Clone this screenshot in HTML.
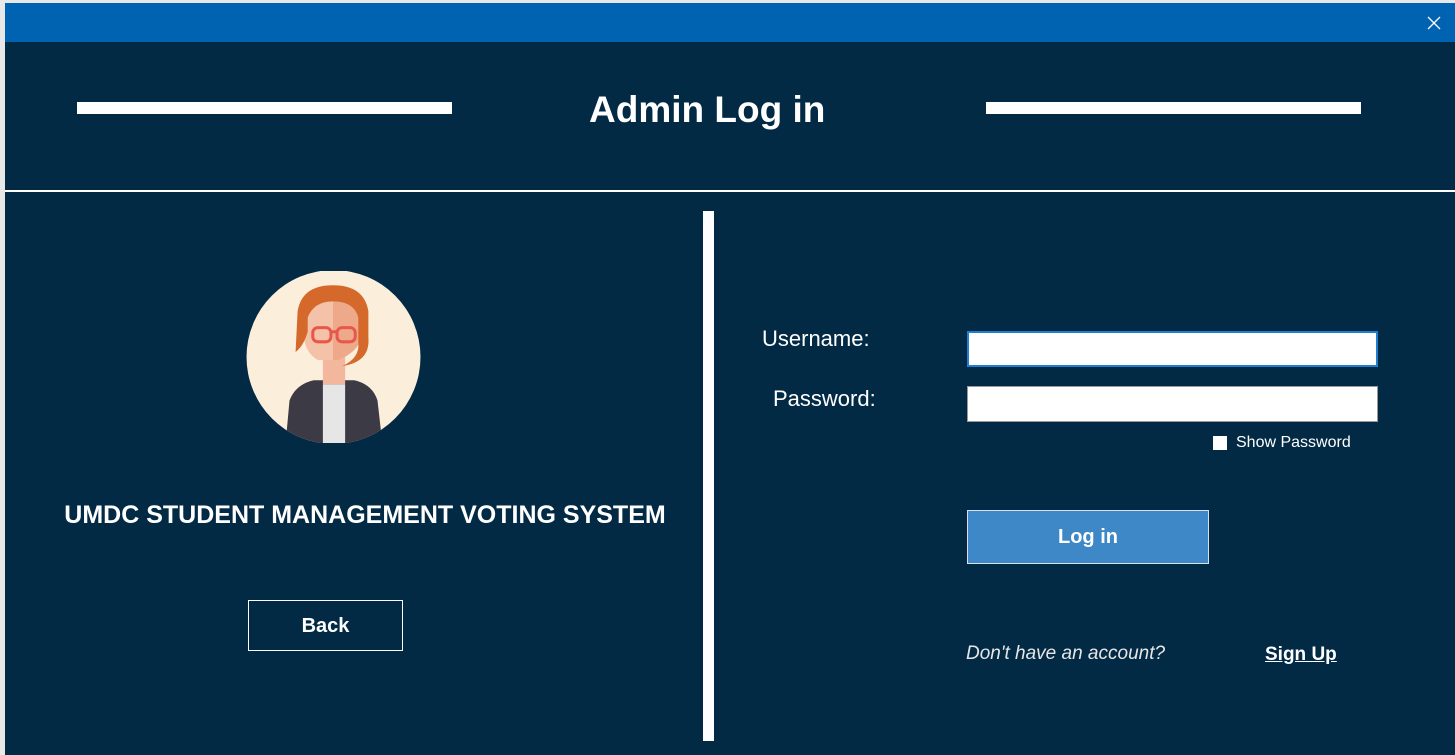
<!DOCTYPE html>
<html><head><meta charset="utf-8"><style>
*{margin:0;padding:0;box-sizing:border-box}
body{width:1455px;height:755px;overflow:hidden;background:#e8e8e8;font-family:"Liberation Sans",sans-serif;position:relative}
.abs{position:absolute}
.t{color:#fff;white-space:nowrap}
</style></head><body>
<div class="abs" style="left:5px;top:3px;width:1450px;height:39px;background:#0063b1"></div>
<svg class="abs" style="left:1427px;top:16px" width="14" height="14" viewBox="0 0 14 14"><path d="M1 1L13 13M13 1L1 13" stroke="#fff" stroke-width="1.3"/></svg>
<div class="abs" style="left:5px;top:42px;width:1450px;height:713px;background:#032a45"></div>
<div class="abs" style="left:77px;top:102px;width:375px;height:12px;background:#fff"></div>
<div class="abs" style="left:986px;top:102px;width:375px;height:12px;background:#fff"></div>
<div class="abs t" style="left:589px;top:89px;font-size:37px;font-weight:bold">Admin Log in</div>
<div class="abs" style="left:5px;top:190px;width:1450px;height:2px;background:#fff"></div>
<div class="abs" style="left:703px;top:211px;width:11px;height:530px;background:#fff"></div>
<svg class="abs" style="left:245px;top:271px" width="177" height="172" viewBox="0 0 175 170">
<defs><clipPath id="c"><circle cx="87.5" cy="85" r="86"/></clipPath></defs>
<circle cx="87.5" cy="85" r="86" fill="#fbeedb"/>
<g clip-path="url(#c)">
<path d="M40 172 L44 128 Q50 112 68 108 L108 108 Q126 112 131 128 L136 172Z" fill="#3c3a44"/>
<rect x="77" y="112" width="22" height="60" fill="#e6e6e6"/>
<rect x="77" y="80" width="22" height="32" fill="#f2b79d"/>
<path d="M58 46 Q58 26 87 24 Q116 26 116 48 L116 64 Q112 80 92 88 L72 88 Q58 80 58 60Z" fill="#f4c2a8"/>
<path d="M87 24 Q116 26 116 48 L116 64 Q112 80 92 88 L87 88Z" fill="#eea98a"/>
<path d="M87 14 Q56 14 52 40 L50 80 Q58 74 62 60 L62 46 Q68 30 87 30 Q108 30 112 46 L112 70 Q114 86 96 94 Q124 90 122 66 L122 40 Q118 14 87 14Z" fill="#d5692b"/>
<g fill="none" stroke="#e8584a" stroke-width="3"><rect x="67" y="56" width="18" height="14" rx="5"/><rect x="91" y="56" width="18" height="14" rx="5"/><path d="M85 60h6"/></g>
</g></svg>
<div class="abs t" style="left:62px;top:501px;font-size:25px;font-weight:bold;width:606px;text-align:center">UMDC STUDENT MANAGEMENT VOTING SYSTEM</div>
<div class="abs t" style="left:248px;top:600px;width:155px;height:51px;border:1.5px solid #fff;font-size:20px;font-weight:bold;text-align:center;line-height:50px">Back</div>
<div class="abs t" style="left:762px;top:326px;font-size:22px">Username:</div>
<div class="abs t" style="left:773px;top:386px;font-size:22px">Password:</div>
<div class="abs" style="left:967px;top:331px;width:411px;height:36px;background:#fff;border:2px solid #1e7fd0"></div>
<div class="abs" style="left:967px;top:386px;width:411px;height:36px;background:#fff;border:1px solid #999"></div>
<div class="abs" style="left:1213px;top:436px;width:14px;height:14px;background:#fff"></div>
<div class="abs t" style="left:1236px;top:434px;font-size:16px">Show Password</div>
<div class="abs t" style="left:967px;top:510px;width:242px;height:54px;background:#3f88c7;border:1.5px solid #dde;font-size:20px;font-weight:bold;text-align:center;line-height:53px">Log in</div>
<div class="abs t" style="left:966px;top:643px;font-size:19px;font-style:italic;color:#e6e6e6">Don't have an account?</div>
<div class="abs t" style="left:1265px;top:644px;font-size:19px;font-weight:bold;text-decoration:underline">Sign Up</div>
</body></html>
